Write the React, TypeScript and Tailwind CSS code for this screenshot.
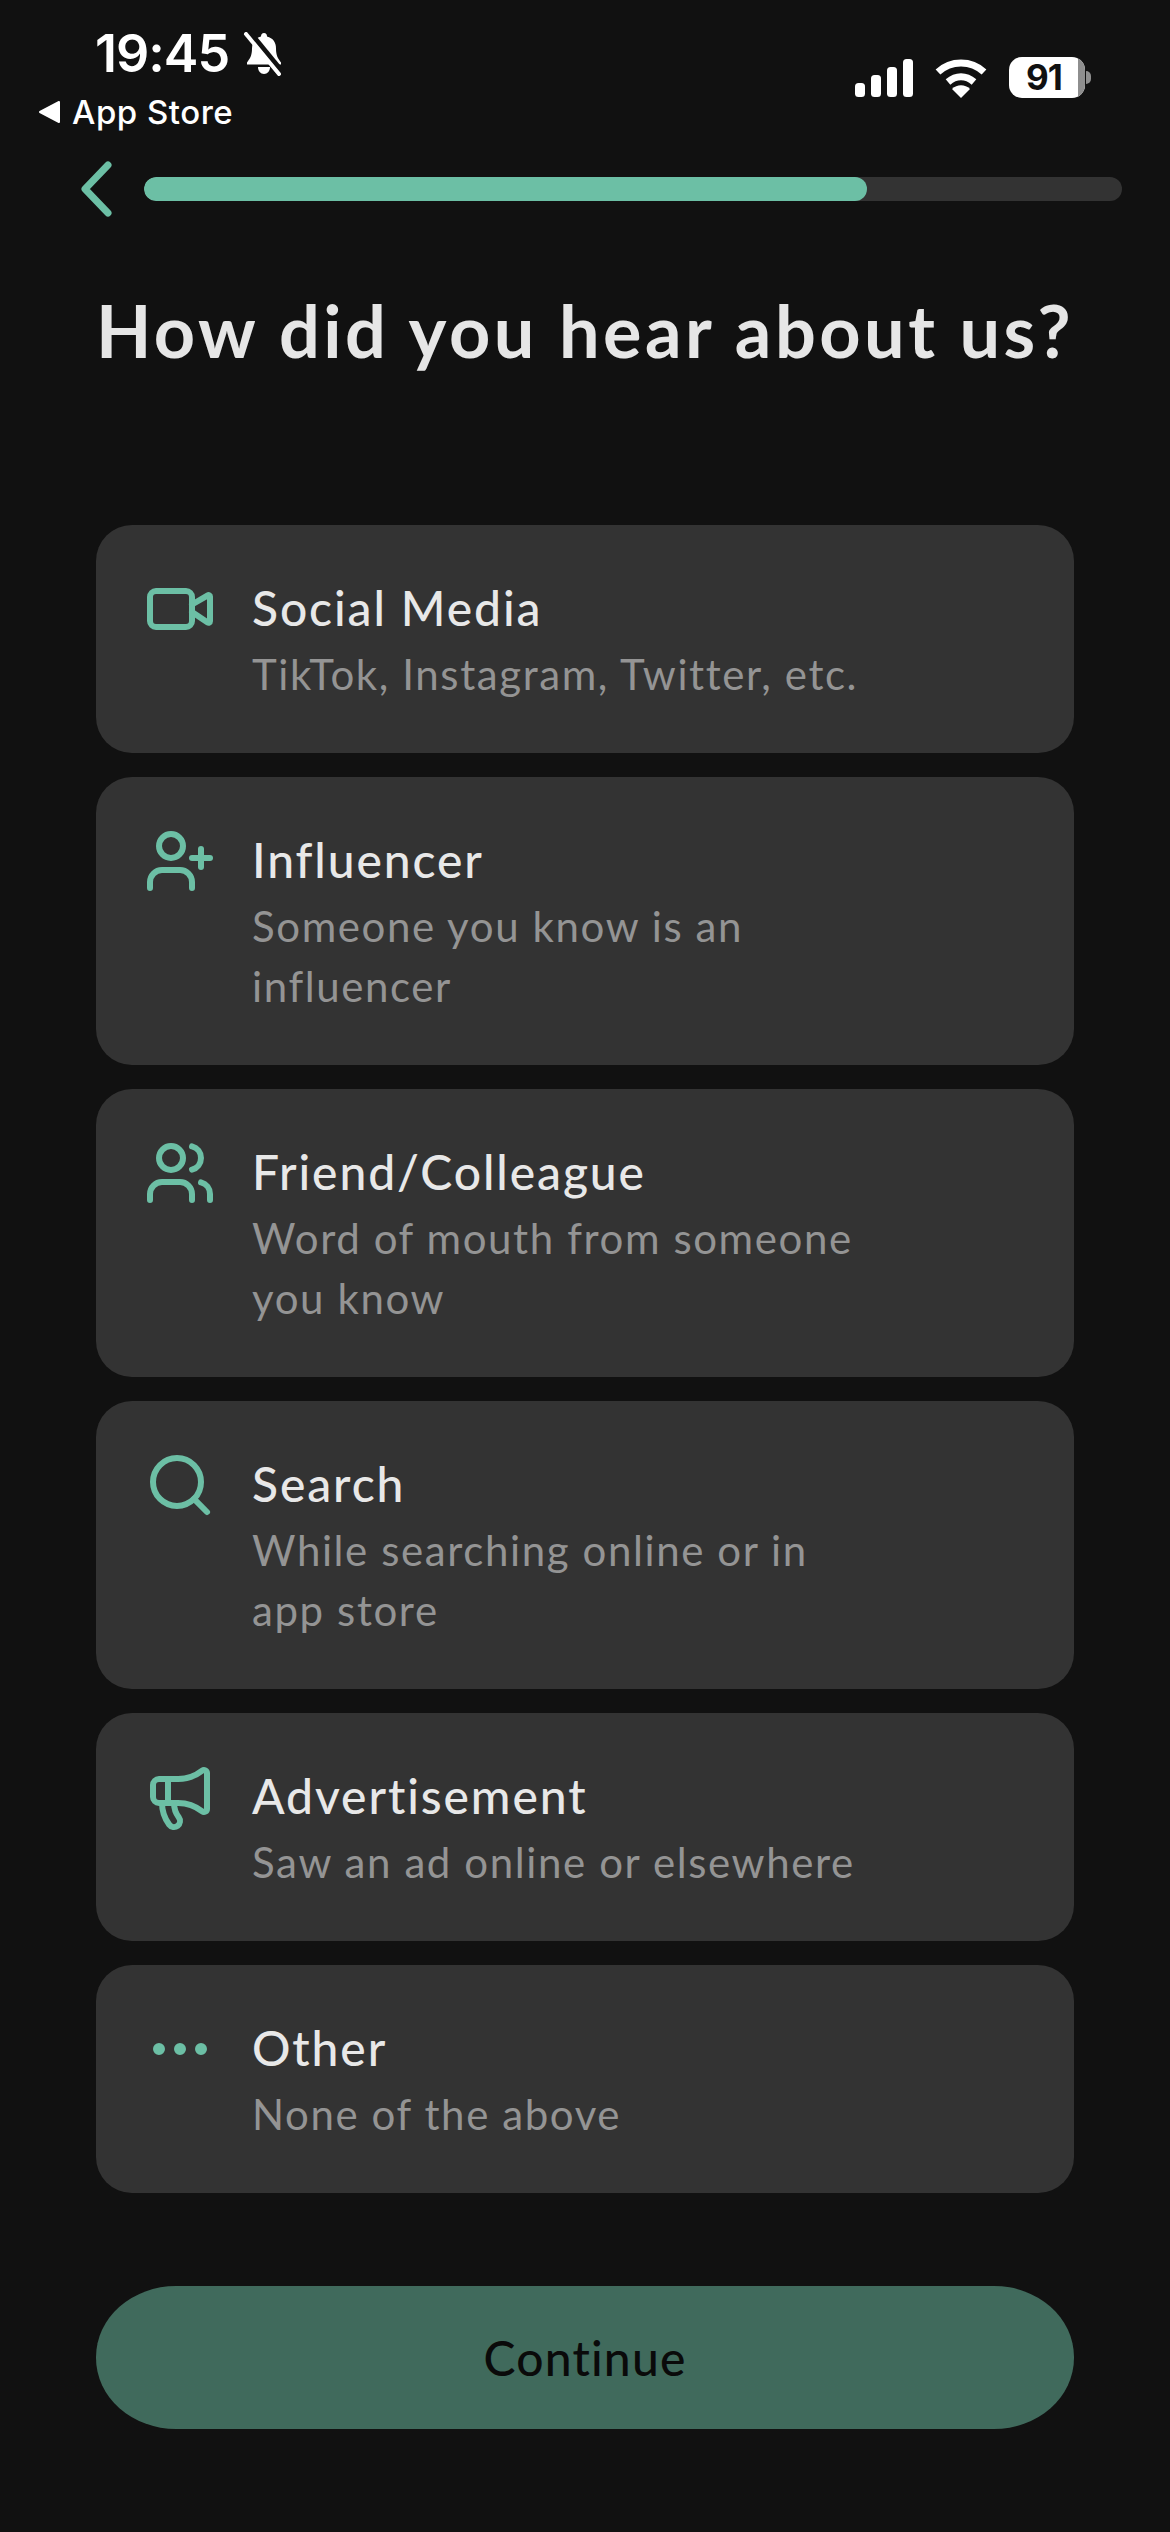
import React from 'react';
import { Ellipsis, Megaphone, Search, UserPlus, Users, Video } from 'lucide-react';

const options = [
  { icon: Video, title: 'Social Media', lines: ['TikTok, Instagram, Twitter, etc.'] },
  { icon: UserPlus, title: 'Influencer', lines: ['Someone you know is an', 'influencer'] },
  { icon: Users, title: 'Friend/Colleague', lines: ['Word of mouth from someone', 'you know'] },
  { icon: Search, title: 'Search', lines: ['While searching online or in', 'app store'] },
  { icon: Megaphone, title: 'Advertisement', lines: ['Saw an ad online or elsewhere'] },
  { icon: Ellipsis, title: 'Other', lines: ['None of the above'] },
];

const StatusBar = () => (
  <div className="flex h-[161px] justify-between font-['Inter',sans-serif] text-white">
    <div className="pl-[38px] pt-[24px]">
      <div className="flex h-[60px] items-center gap-[14px] pl-[57px]">
        <span className="text-[52px] font-semibold leading-[60px] tracking-[-1px]">19:45</span>
        <svg width="42" height="44" viewBox="0 0 42 44">
          <path d="M21 1c2 0 3 1.500 3 3.500 6 1.500 9 6 9 12 0 7 2 10 5 14v2H4v-2c3-4 5-7 5-14 0-6 3-10.500 9-12C18 2.500 19 1 21 1z" fill="white" />
          <path d="M15 35h12c0 4-2.500 7-6 7s-6-3-6-7z" fill="white" />
          <path d="M7 2l32 39" stroke="#111111" strokeWidth="7" />
          <path d="M3 2l33 40" stroke="white" strokeWidth="4" strokeLinecap="round" />
        </svg>
      </div>
      <div className="mt-[10px] flex h-[36px] items-center gap-[10px]">
        <svg width="24" height="24" viewBox="0 0 24 24">
          <path d="M21 2v20L2 12z" fill="white" stroke="white" strokeWidth="2" strokeLinejoin="round" />
        </svg>
        <span className="text-[33px] font-medium leading-[36px] tracking-[0.5px]">App Store</span>
      </div>
    </div>
    <div className="flex items-start gap-[22px] pr-[79px] pt-[57px]">
      <svg width="58" height="40" viewBox="0 0 58 40" className="mt-[2px]">
        <rect x="0" y="24" width="10" height="14" rx="3.500" fill="white" />
        <rect x="16" y="16" width="10" height="22" rx="3.500" fill="white" />
        <rect x="32" y="8" width="10" height="30" rx="3.500" fill="white" />
        <rect x="48" y="0" width="10" height="38" rx="3.500" fill="white" />
      </svg>
      <svg width="52" height="40" viewBox="0 0 52 40" className="mt-[2px]">
        <path d="M3 13C16 1 36 1 49 13" fill="none" stroke="white" strokeWidth="7" />
        <path d="M13 23c8-7 18-7 26 0" fill="none" stroke="white" strokeWidth="7" />
        <path d="M17 30c5-5 13-5 18 0l-9 9z" fill="white" />
      </svg>
      <div className="flex items-center">
        <div className="relative flex h-[41px] w-[76px] items-center justify-center overflow-hidden rounded-[13px] bg-white">
          <div className="absolute bottom-0 right-0 top-0 w-[7px] bg-[#8e8e8e]" />
          <span className="mr-[6px] text-[35px] font-bold leading-none tracking-[-1px] text-[#111111]">91</span>
        </div>
        <div className="ml-[1px] h-[13px] w-[5px] rounded-r-full bg-[#8e8e8e]" />
      </div>
    </div>
  </div>
);

export default function App() {
  return (
    <div className="flex h-[2532px] w-[1170px] flex-col overflow-hidden bg-[#111111] font-['Lato',sans-serif]">
      <StatusBar />

      <div className="flex h-[56px] items-center gap-[32px] pl-[80px] pr-[48px]">
        <svg width="32" height="56" viewBox="0 0 32 56" className="shrink-0">
          <path d="M28 4 5 28l23 24" fill="none" stroke="#6cbfa5" strokeWidth="7" strokeLinecap="round" strokeLinejoin="round" />
        </svg>
        <div className="h-[24px] flex-1 overflow-hidden rounded-[12px] bg-[#333333]">
          <div className="h-full w-[723px] rounded-[12px] bg-[#6cbfa5]" />
        </div>
      </div>

      <h1 className="whitespace-nowrap px-[96px] pb-[147px] pt-[65px] text-[72px] font-bold leading-[96px] tracking-[3.5px] text-[#e6e6e6]">How did you hear about us?</h1>

      <div className="flex flex-col gap-[24px] px-[96px]">
        {options.map(({ icon: Icon, title, lines }) => (
          <div key={title} className="flex gap-[36px] rounded-[36px] bg-[#333333] p-[48px]">
            <Icon size={72} strokeWidth={2} color="#6cbfa5" className="shrink-0" />
            <div className="-translate-y-px">
              <div className="text-[48px] font-medium leading-[72px] tracking-[1.9px] text-[#e8e8e8]">{title}</div>
              {lines.map((line) => (
                <div key={line} className="whitespace-nowrap text-[42px] leading-[60px] tracking-[1.6px] text-[#949494]">{line}</div>
              ))}
            </div>
          </div>
        ))}
      </div>

      <button className="mx-[96px] mt-[93px] flex h-[143px] items-center justify-center rounded-[80px/71px] bg-[#406a5c] text-[48px] font-medium tracking-[1.2px] text-[#0a0a0a]">
        Continue
      </button>
    </div>
  );
}
